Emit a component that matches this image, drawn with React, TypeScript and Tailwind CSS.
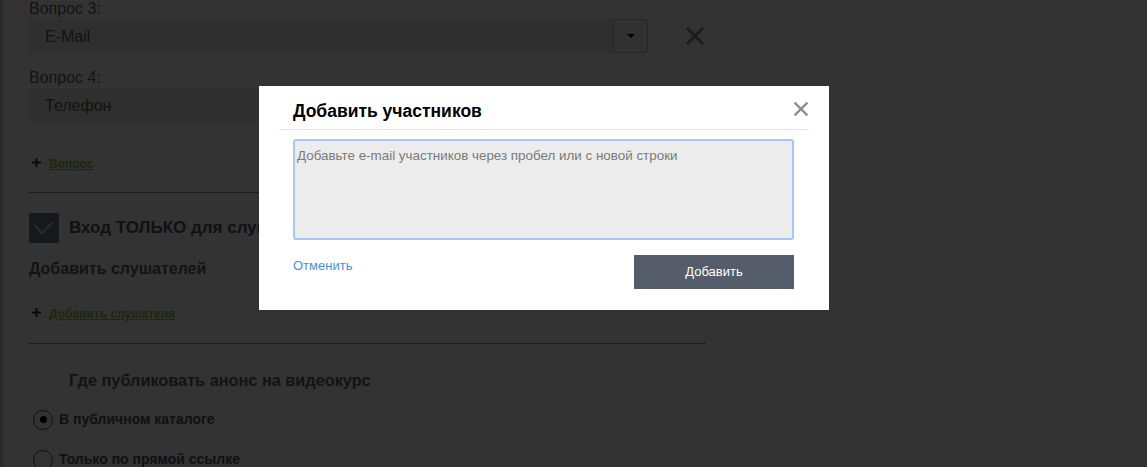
const Plus = () => (
  <svg width="9" height="9" viewBox="0 0 9 9" className="shrink-0">
    <path d="M4.5 0v9M0 4.5h9" stroke="#333" strokeWidth="2" />
  </svg>
);

const Cross = ({ size, color, width }: { size: number; color: string; width: number }) => (
  <svg width={size} height={size} viewBox="0 0 20 20" className="shrink-0">
    <path d="M2 2L18 18M18 2L2 18" stroke={color} strokeWidth={width} />
  </svg>
);

const QuestionField = ({ label, value, select }: { label: string; value: string; select?: boolean }) => (
  <div>
    <div className="text-[16px] leading-[20px] text-[#5e5e5e]">{label}</div>
    <div className="flex items-center">
      <div className="flex h-[34px] w-[620px] items-center justify-between bg-[#e9e9e9]">
        <span className="pl-4 pt-[2px] text-[16px] text-[#5e5e5e]">{value}</span>
        {select && (
          <div className="flex h-[34px] w-[35px] items-center justify-center rounded-r-[5px] border border-[#b8b8b8] bg-[#f2f2f2]">
            <svg width="8" height="4" viewBox="0 0 8 4">
              <path d="M0 0h8L4 4z" fill="#000" />
            </svg>
          </div>
        )}
      </div>
      <div className="ml-[37px]">
        <Cross size={20} color="#8a8a8a" width={3} />
      </div>
    </div>
  </div>
);

const AddLink = ({ text }: { text: string }) => (
  <div className="flex h-4 items-center">
    <div className="ml-[3px] -mt-[3px]">
      <Plus />
    </div>
    <a className="ml-[8px] text-[12px] font-bold leading-4 text-[#94c11f] underline">{text}</a>
  </div>
);

const Radio = ({ label, checked }: { label: string; checked?: boolean }) => (
  <div className="flex items-center">
    <div className="ml-[4px] flex h-5 w-5 items-center justify-center rounded-full border-[1.5px] border-[#4a4a4a] bg-white">
      {checked && <div className="h-[7px] w-[7px] rounded-full bg-black" />}
    </div>
    <span className="ml-[6px] text-[14px] font-bold text-[#555]">{label}</span>
  </div>
);

export default function App() {
  return (
    <div className="relative h-[467px] w-[1147px] overflow-hidden bg-white font-['Liberation_Sans',Arial,sans-serif]">
      {/* страница под модалкой */}
      <div className="h-full border-l-[3px] border-[#d4d4d4]">
        <div className="ml-[26px] w-[676px] -mt-[1px]">
          <QuestionField label="Вопрос 3:" value="E-Mail" select />
          <div className="mt-[15px]">
            <QuestionField label="Вопрос 4:" value="Телефон" />
          </div>

          <div className="mt-[34px]">
            <AddLink text="Вопрос" />
          </div>
          <div className="mt-[20px] border-t border-dotted border-[#333]" />

          <div className="mt-[20px] flex items-center">
            <div className="flex h-[30px] w-[30px] items-center justify-center bg-[#6a7d8c]">
              <svg width="30" height="30" viewBox="0 0 30 30">
                <path d="M6 12L12.7 20.3L23.7 9" fill="none" stroke="#dcefe6" strokeWidth="1.6" />
              </svg>
            </div>
            <span className="ml-[10px] text-[17px] font-bold text-[#555]">Вход ТОЛЬКО для слушателей</span>
          </div>

          <div className="mt-[16px] text-[16px] font-bold leading-[20px] text-[#5e5e5e]">Добавить слушателей</div>

          <div className="mt-[27px]">
            <AddLink text="Добавить слушателя" />
          </div>
          <div className="mt-[21px] border-t border-dotted border-[#333]" />

          <div className="mt-[24px] pl-[40px] text-[16.3px] font-bold leading-[24px] text-[#5e5e5e]">
            Где публиковать анонс на видеокурс
          </div>

          <div className="mt-[17px]">
            <Radio label="В публичном каталоге" checked />
          </div>
          <div className="mt-[19px]">
            <Radio label="Только по прямой ссылке" />
          </div>
        </div>
      </div>

      {/* затемнение */}
      <div className="absolute inset-0 bg-black/80" />

      {/* модалка */}
      <div className="absolute left-[259px] top-[86px] h-[224px] w-[570px] bg-white">
        <div className="mx-5 flex items-start justify-between border-b border-[#e6e6e6] pb-[6px] pt-[13px]">
          <h2 className="pl-[14px] text-[17.5px] font-bold leading-[24px] text-black">Добавить участников</h2>
          <div className="mt-[2px]">
            <Cross size={16} color="#8c8c8c" width={2.8} />
          </div>
        </div>
        <div className="pl-[34px] pr-[35px]">
          <textarea
            readOnly
            placeholder="Добавьте e-mail участников через пробел или с новой строки"
            className="mt-[9px] block h-[101px] w-full resize-none rounded-[3px] border-2 border-[#a6c6f6] bg-[#ececec] px-[2px] pt-[5px] text-[13.4px] leading-5 outline-none placeholder:text-[#7a7a7a]"
          />
          <div className="mt-[15px] flex items-start justify-between">
            <a className="mt-[1px] text-[13px] leading-5 text-[#4a8fd9]">Отменить</a>
            <button className="h-[34px] w-[160px] bg-[#545d69] text-[13px] text-white">Добавить</button>
          </div>
        </div>
      </div>
    </div>
  );
}
